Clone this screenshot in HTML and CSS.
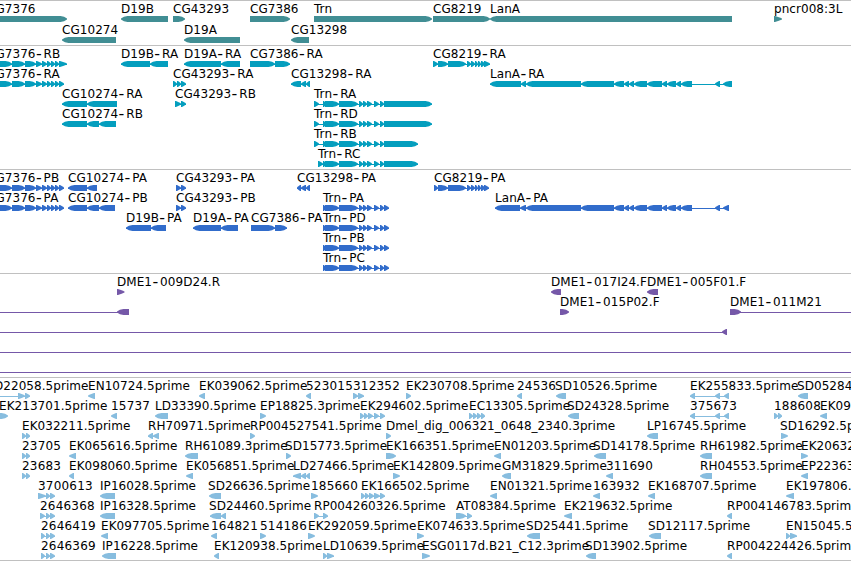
FILE: index.html
```html
<!DOCTYPE html>
<html lang="en">
<head>
<meta charset="utf-8">
<title>Genome tracks</title>
<link rel="stylesheet" href="styles.css">
</head>
<body>
<main class="tracks">
  <section class="track track--gene" id="gene"></section>
  <section class="track track--rna" id="rna"></section>
  <section class="track track--protein" id="protein"></section>
  <section class="track track--bac" id="bac"></section>
  <section class="track track--est" id="est"></section>
</main>
<script src="tracks.js"></script>
</body>
</html>
```
FILE: styles.css
```css
body {
  margin: 0;
  background: #fff;
}

.tracks {
  width: 851px;
  height: 561px;
  overflow: hidden;
}

.track {
  box-sizing: border-box;
  border-top: 1px solid #c0c0c0;
  padding-bottom: 3px;
  --row: 20px;
}

.track--gene { color: #418e94; padding-bottom: 2px; --row: 21px; }
.track--rna { color: #049ebe; }
.track--protein { color: #316ccb; }
.track--bac { color: #7558a8; }
.track--est { color: #87bddf; padding-bottom: 2px; border-bottom: 1px solid #c0c0c0; }

.row {
  display: block;
  width: 100%;
  height: var(--row);
  overflow: visible;
}

.feature { fill: currentColor; }

.label {
  fill: #000;
  font: 12px "DejaVu Sans", sans-serif;
  letter-spacing: 0.05px;
  white-space: pre;
}

.label--number { letter-spacing: 0.2px; }

.dash {
  font-size: 16px;
  letter-spacing: 1.9px;
}
```
FILE: tracks.js
```js
// Feature: [start, label, direction, [exon start, exon end, ...]]
const G = end => [-8,12, 12,25, 25,36, 36,42, 42,47, 47,51, 51,55, 55,59, 59,end];
const trn = [323,326, 325,339, 339,358, 359,363, 363,367, 367,372, 374,379];
const trnR = (s, end) => [s, s + 5, ...trn, 380,384, 384,end];
const trnP = [...trn, 380,384, 384,389];
const lan = (s, a, end) => [s,a, a,526, 526,581, 581,614, 614,624, 624,629, 629,634,
  634,647, 647,662, 662,667, 667,676, 676,681, 681,692, 715,720, 723,end];
const cg8219 = (s, end) => [s,438, 438,448, 448,466, 467,471, 471,475, 475,478,
  478,481, 481,485, 484,end];

const data = {
  gene: [
    [[-13,'CG7376',1,[-20,67]], [121,'D19B',-1,[121,168]], [173,'CG43293',1,[173,185]],
     [250,'CG7386',1,[250,290]], [314,'Trn',1,[314,432]], [433,'CG8219',1,[433,490]],
     [490,'LanA',-1,[490,732]], [774,'pncr008:3L',1,[774,782]]],
    [[62,'CG10274',-1,[62,116]], [184,'D19A',-1,[184,240]], [291,'CG13298',-1,[291,309]]]
  ],
  rna: [
    [[-13,'CG7376-RB',1,G(67)], [121,'D19B-RA',-1,[121,150,150,168]],
     [184,'D19A-RA',-1,[184,221,221,240]], [250,'CG7386-RA',1,[250,275,275,290]],
     [433,'CG8219-RA',1,cg8219(433,490)]],
    [[-13,'CG7376-RA',1,G(64)], [173,'CG43293-RA',1,[173,177,177,181,181,186]],
     [291,'CG13298-RA',-1,[291,301,301,306,306,310]], [490,'LanA-RA',-1,lan(490,521,732)]],
    [[62,'CG10274-RA',-1,[62,87,87,117]], [175,'CG43293-RB',1,[175,181,181,186]],
     [314,'Trn-RA',1,trnR(314,432)]],
    [[62,'CG10274-RB',-1,[62,87,87,99,99,116]], [314,'Trn-RD',1,trnR(314,432)]],
    [[314,'Trn-RB',1,trnR(314,418)]],
    [[318,'Trn-RC',1,trnR(318,418)]]
  ],
  protein: [
    [[-13,'CG7376-PB',1,G(64)], [68,'CG10274-PA',-1,[68,87,87,97]],
     [176,'CG43293-PA',1,[176,181,181,186]], [297,'CG13298-PA',-1,[297,301,301,306,306,310]],
     [434,'CG8219-PA',1,cg8219(434,489)]],
    [[-13,'CG7376-PA',1,G(64)], [68,'CG10274-PB',-1,[68,87,87,99,99,115]],
     [176,'CG43293-PB',1,[176,181,181,186]], [323,'Trn-PA',1,trnP],
     [495,'LanA-PA',-1,lan(495,520,729)]],
    [[126,'D19B-PA',-1,[126,151,151,166]], [193,'D19A-PA',-1,[193,221,221,238]],
     [251,'CG7386-PA',1,[251,275,275,287]], [323,'Trn-PD',1,trnP]],
    [[323,'Trn-PB',1,trnP]],
    [[323,'Trn-PC',1,trnP]]
  ],
  bac: [
    [[117,'DME1-009D24.R',1,[117,124.5]], [551,'DME1-017I24.F',-1,[551,561]],
     [647,'DME1-005F01.F',-1,[647,658]]],
    [[0,'',-1,[-20,-10,117,129]], [560,'DME1-015P02.F',1,[560,569]],
     [730,'DME1-011M21',1,[730,741,870,880]]],
    [[0,'',-1,[-20,-10,722,727]]],
    [[0,'',1,[-20,-10,870,880]]],
    [[0,'',1,[-20,-10,870,880]]]
  ],
  est: [
    [[-6,'D22058.5prime',1,[-20,-10,18,25,25,30]], [88,'EN10724.5prime',-1,[88,95]],
     [199,'EK039062.5prime',-1,[199,205]], [306,'523015',-1,[306,311]],
     [353,'312352',1,[353,358,358,364]], [406,'EK230708.5prime',1,[406,411]],
     [517,'24536',-1,[517,522]], [555,'SD10526.5prime',-1,[556,566]],
     [690,'EK255833.5prime',-1,[690,695,715,720,724,729]], [797,'SD05284.5prime',-1,[798,808]]],
    [[-1,'EK213701.5prime',1,[-1,8]], [111,'15737',-1,[111,117]],
     [155,'LD33390.5prime',-1,[155,168]], [260,'EP18825.3prime',1,[260,266]],
     [360,'EK294602.5prime',1,[360,364,364,368,368,373,374,379,380,385]],
     [469,'EC13305.5prime',1,[469,473,473,477,477,481,481,485]],
     [567,'SD24328.5prime',-1,[568,579]], [690,'375673',-1,[690,695,715,720,724,729]],
     [774,'188608',1,[774,778,778,782]], [820,'EK09',-1,[820,827]]],
    [[22,'EK032211.5prime',1,[22,26,26,30]], [148,'RH70971.5prime',-1,[148,153,153,159]],
     [250,'RP004527541.5prime',1,[250,255]],
     [386,'Dmel_dig_006321_0648_2340.3prime',1,[386,391]],
     [647,'LP16745.5prime',-1,[647,658]], [780,'SD16292.5prime',1,[781,788]]],
    [[22,'23705',1,[22,26,26,30]], [69,'EK065616.5prime',-1,[69,76]],
     [185,'RH61089.3prime',-1,[185,198]], [285,'SD15773.5prime',1,[286,291]],
     [386,'EK166351.5prime',1,[386,396]], [494,'EN01203.5prime',-1,[494,501]],
     [593,'SD14178.5prime',-1,[594,606]], [700,'RH61982.5prime',-1,[700,712]],
     [801,'EK20632',1,[801,808]]],
    [[22,'23683',1,[22,26,26,30]], [69,'EK098060.5prime',-1,[69,74]],
     [186,'EK056851.5prime',-1,[186,193]], [293,'LD27466.5prime',-1,[293,301,301,306,306,310]],
     [393,'EK142809.5prime',1,[393,400]], [502,'GM31829.5prime',-1,[502,511]],
     [606,'311690',-1,[606,613]], [700,'RH04553.5prime',-1,[700,712]],
     [801,'EP22363',-1,[801,808]]],
    [[38,'3700613',1,[38,46,46,50,50,55]], [100,'IP16028.5prime',-1,[100,115]],
     [208,'SD26636.5prime',-1,[209,221]], [311,'185660',1,[311,318]],
     [361,'EK166502.5prime',1,[361,365,365,369,369,374,374,380,380,385]],
     [490,'EN01321.5prime',-1,[490,497]], [593,'163932',-1,[593,600]],
     [648,'EK168707.5prime',-1,[648,655]], [786,'EK197806.5prime',-1,[786,794]]],
    [[40,'2646368',1,[40,45,46,50,50,55]], [100,'IP16328.5prime',-1,[100,115]],
     [209,'SD24460.5prime',-1,[210,221,221,226]], [314,'RP004260326.5prime',1,[314,319,323,328]],
     [456,'AT08384.5prime',1,[456,466,467,472]], [564,'EK219632.5prime',-1,[564,572]],
     [727,'RP004146783.5prime',-1,[727,732]]],
    [[41,'2646419',1,[41,45,46,50,50,55]], [101,'EK097705.5prime',-1,[101,108]],
     [211,'164821',-1,[211,217]], [260,'514186',1,[260,266]],
     [308,'EK292059.5prime',1,[308,315]], [417,'EK074633.5prime',1,[417,424]],
     [526,'SD25441.5prime',-1,[527,540]], [648,'SD12117.5prime',-1,[649,661]],
     [786,'EN15045.5prime',1,[786,790,790,797]]],
    [[41,'2646369',1,[41,45,46,50,50,55]], [102,'IP16228.5prime',-1,[102,116]],
     [214,'EK120938.5prime',-1,[214,219]], [323,'LD10639.5prime',1,[323,327,327,334]],
     [422,'ESG0117d.B21_C12.3prime',1,[422,430]], [585,'SD13902.5prime',-1,[586,596]],
     [727,'RP004224426.5prime',-1,[727,732]]]
  ]
};

const TOP = 15, MID = 18, BOTTOM = 21, BASE = 12;

// One exon: a bar that narrows to a point at its leading end.
function arrow(a, b, dir) {
  const w = b - a;
  const head = w > 8 ? 6.5 : w - 1;
  const tip = dir > 0 ? b : a;
  const tail = dir > 0 ? a : b;
  const neck = tip - dir * head;
  const bend = tip - dir * head * 0.45;
  const lift = w > 8 ? 2.2 : 1.7;
  return `M${tail} ${TOP}H${neck}L${bend} ${MID - lift}L${tip} ${MID - 0.5}` +
    `V${MID + 0.5}L${bend} ${MID + lift}L${neck} ${BOTTOM}H${tail}Z`;
}

function feature([x, label, dir, exons]) {
  const first = exons[0], last = exons[exons.length - 1];
  // Each exon is its own path so that overlapping exons never cancel out.
  const shapes = [];
  for (let i = 0; i < exons.length; i += 2) {
    shapes.push(`<path class="feature" d="${arrow(exons[i], exons[i + 1], dir)}"/>`);
  }
  const line = exons.length > 2
    ? `<rect class="feature" x="${first}" y="${MID}" width="${last - first}" height="1"/>` : '';
  const kind = /^\d+$/.test(label) ? 'label label--number' : 'label';
  // Wide dash, lowered to sit at the middle of the capitals.
  const html = label.replace(/-(.)/,
    '<tspan class="dash" dx="0.4" dy="1">-</tspan><tspan dy="-1">$1</tspan>');
  const text = label ? `<text class="${kind}" x="${x}" y="${BASE}">${html}</text>` : '';
  return line + shapes.join('') + text;
}

for (const [id, rows] of Object.entries(data)) {
  document.getElementById(id).innerHTML =
    rows.map(r => `<svg class="row">${r.map(feature).join('')}</svg>`).join('');
}
```
